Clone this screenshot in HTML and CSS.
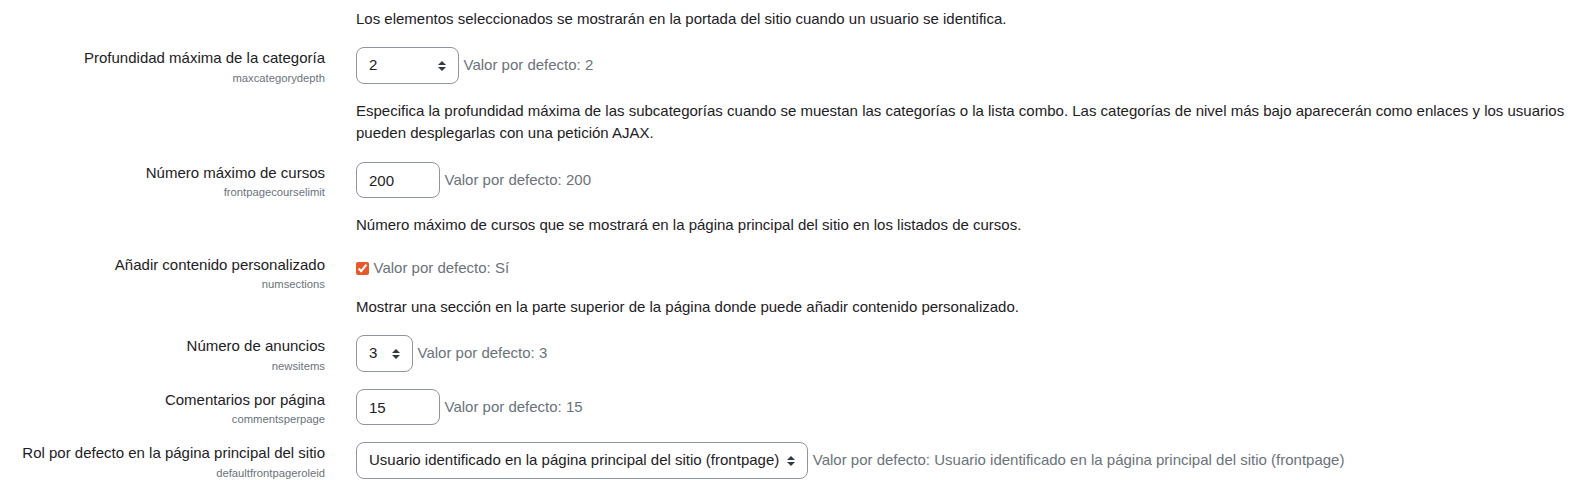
FILE: index.html
```html
<!DOCTYPE html>
<html lang="es">
<head>
<meta charset="utf-8">
<title>Página principal</title>
<link rel="stylesheet" href="styles.css">
</head>
<body>
<div class="settings">
  <div class="form-item">
    <div class="form-label"></div>
    <div class="form-setting">
      <div class="form-description first">Los elementos seleccionados se mostrarán en la portada del sitio cuando un usuario se identifica.</div>
    </div>
  </div>

  <div class="form-item">
    <div class="form-label">
      <label>Profundidad máxima de la categoría</label>
      <span class="shortname">maxcategorydepth</span>
    </div>
    <div class="form-setting">
      <div class="setting-line">
        <div class="select w-103"><span class="select-text">2</span><svg class="arrows" viewBox="0 0 4 5" width="8" height="10"><path d="M2 0L0 2h4zm0 5L0 3h4z"/></svg></div>
        <span class="defaultinfo">Valor por defecto: 2</span>
      </div>
      <div class="form-description">Especifica la profundidad máxima de las subcategorías cuando se muestan las categorías o la lista combo. Las categorías de nivel más bajo aparecerán como enlaces y los usuarios pueden desplegarlas con una petición AJAX.</div>
    </div>
  </div>

  <div class="form-item">
    <div class="form-label">
      <label>Número máximo de cursos</label>
      <span class="shortname">frontpagecourselimit</span>
    </div>
    <div class="form-setting">
      <div class="setting-line">
        <input class="text-input" type="text" value="200">
        <span class="defaultinfo">Valor por defecto: 200</span>
      </div>
      <div class="form-description">Número máximo de cursos que se mostrará en la página principal del sitio en los listados de cursos.</div>
    </div>
  </div>

  <div class="form-item">
    <div class="form-label">
      <label>Añadir contenido personalizado</label>
      <span class="shortname">numsections</span>
    </div>
    <div class="form-setting">
      <div class="setting-line check-line">
        <input class="checkbox" type="checkbox" checked>
        <span class="defaultinfo">Valor por defecto: Sí</span>
      </div>
      <div class="form-description">Mostrar una sección en la parte superior de la página donde puede añadir contenido personalizado.</div>
    </div>
  </div>

  <div class="form-item">
    <div class="form-label">
      <label>Número de anuncios</label>
      <span class="shortname">newsitems</span>
    </div>
    <div class="form-setting">
      <div class="setting-line">
        <div class="select w-57"><span class="select-text">3</span><svg class="arrows" viewBox="0 0 4 5" width="8" height="10"><path d="M2 0L0 2h4zm0 5L0 3h4z"/></svg></div>
        <span class="defaultinfo">Valor por defecto: 3</span>
      </div>
    </div>
  </div>

  <div class="form-item">
    <div class="form-label">
      <label>Comentarios por página</label>
      <span class="shortname">commentsperpage</span>
    </div>
    <div class="form-setting">
      <div class="setting-line">
        <input class="text-input" type="text" value="15">
        <span class="defaultinfo">Valor por defecto: 15</span>
      </div>
    </div>
  </div>

  <div class="form-item">
    <div class="form-label">
      <label>Rol por defecto en la página principal del sitio</label>
      <span class="shortname">defaultfrontpageroleid</span>
    </div>
    <div class="form-setting">
      <div class="setting-line">
        <div class="select"><span class="select-text">Usuario identificado en la página principal del sitio (frontpage)</span><svg class="arrows" viewBox="0 0 4 5" width="8" height="10"><path d="M2 0L0 2h4zm0 5L0 3h4z"/></svg></div>
        <span class="defaultinfo">Valor por defecto: Usuario identificado en la página principal del sitio (frontpage)</span>
      </div>
    </div>
  </div>
</div>
</body>
</html>
```

FILE: styles.css
```css
html, body {
  margin: 0;
  padding: 0;
  background: #fff;
}

body {
  font-family: "Liberation Sans", Arial, sans-serif;
  font-size: 15px;
  line-height: 1.5;
  color: #1d2125;
  overflow: hidden;
}

.settings {
  display: flex;
  flex-direction: column;
  gap: 17px;
  padding: 7.75px 15px 0 0;
}

.form-item {
  display: grid;
  grid-template-columns: 325px 1fr;
  column-gap: 31px;
  align-items: start;
}

.form-label {
  display: flex;
  flex-direction: column;
  align-items: flex-end;
  text-align: right;
}

.form-label label {
  display: block;
  line-height: 22.5px;
}

.shortname {
  display: block;
  font-size: 11.25px;
  line-height: 16.875px;
  margin-bottom: -2.875px;
  color: #6a737b;
}

.form-setting {
  display: flex;
  flex-direction: column;
  gap: 16px;
  min-width: 0;
}

.setting-line {
  display: flex;
  align-items: center;
  gap: 4.5px;
}

.check-line {
  padding-top: 3.5px;
  height: 22.5px;
}

.defaultinfo {
  color: #6a737b;
  white-space: nowrap;
}

.form-description {
  line-height: 22.5px;
}

.select {
  box-sizing: border-box;
  height: 36.5px;
  display: inline-flex;
  align-items: center;
  padding: 0 12px 0 12px;
  border: 1px solid #8f959e;
  border-radius: 8px;
  background: #fff;
  color: #1d2125;
  white-space: nowrap;
  flex: none;
}

.select-text {
  flex: 1;
}

.select .arrows {
  display: block;
  margin-left: 8px;
  fill: #343a40;
  flex: none;
}

.w-103 {
  width: 103px;
}

.w-57 {
  width: 57px;
}

.text-input {
  box-sizing: border-box;
  width: 84px;
  height: 36.5px;
  margin: 0;
  padding: 6px 12px;
  border: 1px solid #8f959e;
  border-radius: 8px;
  background: #fff;
  color: #1d2125;
  font: inherit;
  outline: none;
  flex: none;
}

.checkbox {
  width: 13px;
  height: 13px;
  margin: 0 0 0 0;
  accent-color: #e9582a;
  flex: none;
}
```
